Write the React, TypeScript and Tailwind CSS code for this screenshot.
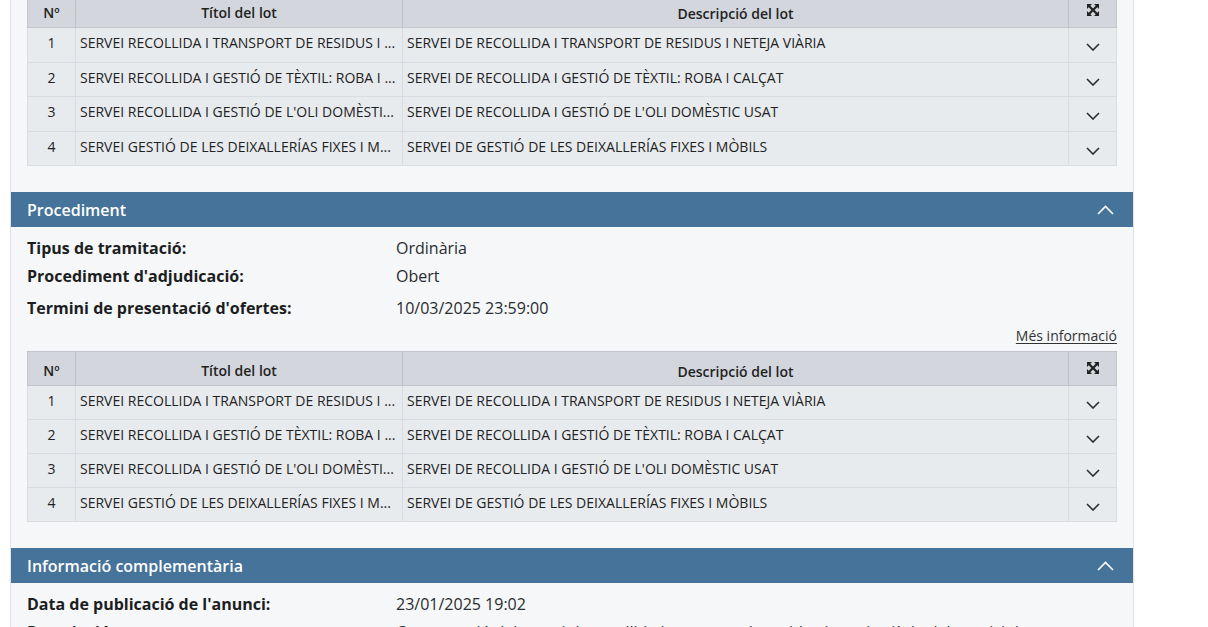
import React from 'react';

const lots = [
  {
    n: 1,
    title: 'SERVEI RECOLLIDA I TRANSPORT DE RESIDUS I ...',
    desc: 'SERVEI DE RECOLLIDA I TRANSPORT DE RESIDUS I NETEJA VIÀRIA',
  },
  {
    n: 2,
    title: 'SERVEI RECOLLIDA I GESTIÓ DE TÈXTIL: ROBA I ...',
    desc: 'SERVEI DE RECOLLIDA I GESTIÓ DE TÈXTIL: ROBA I CALÇAT',
  },
  {
    n: 3,
    title: "SERVEI RECOLLIDA I GESTIÓ DE L'OLI DOMÈSTI...",
    desc: "SERVEI DE RECOLLIDA I GESTIÓ DE L'OLI DOMÈSTIC USAT",
  },
  {
    n: 4,
    title: 'SERVEI GESTIÓ DE LES DEIXALLERÍAS FIXES I M...',
    desc: 'SERVEI DE GESTIÓ DE LES DEIXALLERÍAS FIXES I MÒBILS',
  },
];

function ExpandIcon() {
  return (
    <svg width="12" height="12" viewBox="0 0 12 12" fill="#222">
      <path d="M0 0h5L3.3 1.7 6 4.4 8.7 1.7 7 0h5v5l-1.7-1.7L7.6 6l2.7 2.7L12 7v5H7l1.7-1.7L6 7.6 3.3 10.3 5 12H0V7l1.7 1.7L4.4 6 1.7 3.3 0 5z" />
    </svg>
  );
}

function ChevronDown() {
  return (
    <svg width="14" height="8" viewBox="0 0 14 8" fill="none" stroke="#2a2d31" strokeWidth="1.6">
      <path d="M1 1l6 6 6-6" />
    </svg>
  );
}

function ChevronUp() {
  return (
    <svg width="17" height="10" viewBox="0 0 17 10" fill="none" stroke="#ffffff" strokeWidth="1.6">
      <path d="M1 9l7.5-7.5L16 9" />
    </svg>
  );
}

function LotsTable({ cut }: { cut?: boolean }) {
  const rowH = cut ? 'h-[34.5px]' : 'h-[34px]';
  return (
    <table className={`w-[1089px] table-fixed border-collapse text-[14px] text-[#222] ${cut ? '-mt-[7px]' : ''}`}>
      <colgroup>
        <col className="w-[48px]" />
        <col className="w-[327px]" />
        <col className="w-[666px]" />
        <col className="w-[48px]" />
      </colgroup>
      <thead>
        <tr className="h-[34px] bg-[#d3d7dd] border border-[#c3c7cd]">
          <th className="font-semibold text-center border-r border-[#bfc3c9] pt-[4px]">Nº</th>
          <th className="font-semibold text-center border-r border-[#bfc3c9] pt-[4px]">Títol del lot</th>
          <th className="font-semibold text-center border-r border-[#bfc3c9] pt-[5px]">Descripció del lot</th>
          <th className="text-center">
            <span className="inline-flex items-center justify-center">
              <ExpandIcon />
            </span>
          </th>
        </tr>
      </thead>
      <tbody>
        {lots.map((lot) => (
          <tr key={lot.n} className={`${rowH} bg-[#e8ebee] border-b border-x border-[#d9dde2]`}>
            <td className="text-center border-r border-[#d9dde2] pb-[4px]">{lot.n}</td>
            <td className="px-[4px] whitespace-nowrap overflow-hidden border-r border-[#d9dde2] pb-[4px]">{lot.title}</td>
            <td className="px-[4px] whitespace-nowrap overflow-hidden border-r border-[#d9dde2] pb-[4px]">{lot.desc}</td>
            <td className="text-center pt-[2px]">
              <span className="inline-flex items-center justify-center">
                <ChevronDown />
              </span>
            </td>
          </tr>
        ))}
      </tbody>
    </table>
  );
}

function SectionHeader({ title }: { title: string }) {
  return (
    <div className="h-[35px] bg-[#45739a] flex items-center justify-between pl-[16px] pr-[19px]">
      <span className="text-white font-semibold text-[16px]">{title}</span>
      <ChevronUp />
    </div>
  );
}

function InfoRow({ label, value, h = 'h-[28px]' }: { label: string; value: string; h?: string }) {
  return (
    <div className={`flex items-center ${h} text-[16px]`}>
      <span className="w-[369px] shrink-0 font-bold text-[#1c1e21]">{label}</span>
      <span className="text-[#2a2c2f] whitespace-nowrap">{value}</span>
    </div>
  );
}

export default function App() {
  return (
    <div
      className="w-[1208px] h-[627px] overflow-hidden bg-white"
      style={{ fontFamily: '"Open Sans", "Noto Sans", Arial, sans-serif' }}
    >
      <div className="ml-[10px] w-[1124px] min-h-[700px] bg-[#f5f7f9] border-x border-[#dfe3e8]">
        <div className="px-[16px]">
          <LotsTable cut />
        </div>

        <div className="mt-[26px]">
          <SectionHeader title="Procediment" />
          <div className="px-[16px] pt-[7px]">
            <InfoRow label="Tipus de tramitació:" value="Ordinària" />
            <InfoRow label="Procediment d'adjudicació:" value="Obert" />
            <InfoRow label="Termini de presentació d'ofertes:" value="10/03/2025 23:59:00" h="h-[32px] pt-[4px]" />
            <div className="flex justify-end h-[20px] mt-[3px]">
              <a href="#" className="text-[14px] text-[#333] underline underline-offset-2">
                Més informació
              </a>
            </div>
            <div className="mt-[6px]">
              <LotsTable />
            </div>
          </div>
        </div>

        <div className="mt-[26px]">
          <SectionHeader title="Informació complementària" />
          <div className="px-[16px] pt-[7px]">
            <InfoRow label="Data de publicació de l'anunci:" value="23/01/2025 19:02" />
            <InfoRow
              label="Descripció:"
              value="Contractació del servei de recollida i transport de residus i neteja viària del municipi"
            />
          </div>
        </div>
      </div>
    </div>
  );
}
